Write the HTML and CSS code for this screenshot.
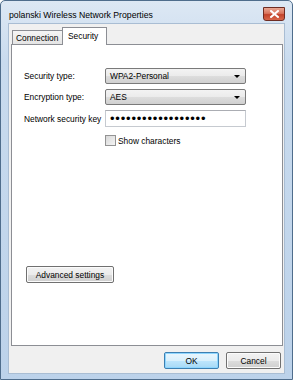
FILE: index.html
```html
<!DOCTYPE html>
<html lang="en">
<head>
    <meta charset="UTF-8">
    <title>polanski Wireless Network Properties</title>
    <link rel="stylesheet" href="styles.css">
</head>
<body>
    <div class="window">
        <div class="titlebar">
            <span class="title">polanski Wireless Network Properties</span>
            <button class="close" title="Close">
                <svg width="9" height="8" viewBox="0 0 9 8">
                    <path d="M1 1 L8 7 M8 1 L1 7" stroke="#ffffff" stroke-width="2" stroke-linecap="square"/>
                </svg>
            </button>
        </div>
        <div class="client">
            <div class="tabs">
                <div class="tab">Connection</div>
                <div class="tab active">Security</div>
            </div>
            <div class="panel">
                <div class="form">
                    <label class="label">Security type:</label>
                    <div class="combo">WPA2-Personal<span class="arrow"></span></div>
                    <label class="label">Encryption type:</label>
                    <div class="combo">AES<span class="arrow"></span></div>
                    <label class="label">Network security key</label>
                    <div class="textbox">&bull;&bull;&bull;&bull;&bull;&bull;&bull;&bull;&bull;&bull;&bull;&bull;&bull;&bull;&bull;&bull;&bull;&bull;</div>
                    <div class="check-row">
                        <span class="checkbox"></span>
                        <span>Show characters</span>
                    </div>
                </div>
                <button class="btn advanced">Advanced settings</button>
            </div>
            <div class="actions">
                <button class="btn default">OK</button>
                <button class="btn">Cancel</button>
            </div>
        </div>
    </div>
</body>
</html>
```

FILE: styles.css
```css
* {
    box-sizing: border-box;
}
body {
    margin: 0;
    padding: 0;
    background-color: #ffffff;
    font-family: "Liberation Sans", Arial, sans-serif;
    font-size: 8.4px;
    color: #000000;
}
.window {
    width: 293px;
    height: 380px;
    border: 1px solid #4f6d8c;
    border-radius: 5px 5px 0 0;
    background: linear-gradient(to bottom, #dde8f4 0px, #c9dbee 60px, #bcd2ea 380px);
    display: flex;
    flex-direction: column;
}
.titlebar {
    height: 22px;
    display: flex;
    align-items: center;
    padding: 0 7px 0 8px;
}
.title {
    flex: 1;
    font-size: 8.7px;
    padding-top: 6px;
}
.close {
    width: 22px;
    height: 14px;
    margin-top: 3px;
    padding: 0;
    border: 1px solid #6e2c22;
    border-radius: 0 0 3px 3px;
    background: linear-gradient(to bottom, #e9a793 0%, #d9745d 45%, #c2432b 55%, #d8664a 100%);
    display: flex;
    align-items: center;
    justify-content: center;
}
.client {
    height: 351px;
    margin: 0 7px 0 7px;
    background-color: #f0f0f0;
    border: 1px solid #a9bdd3;
    padding: 3px 1px 0 2px;
    display: flex;
    flex-direction: column;
}
.tabs {
    height: 17px;
    display: flex;
    align-items: flex-end;
    padding-left: 1px;
}
.tab {
    height: 14px;
    padding: 1px 3px 0 3px;
    border: 1px solid #8c8e94;
    border-bottom: none;
    background: linear-gradient(to bottom, #f5f5f5, #e4e4e4);
    width: 51px;
    line-height: 12px;
    white-space: nowrap;
}
.tab.active {
    height: 18px;
    width: 45px;
    margin-left: -1px;
    margin-bottom: -1px;
    padding: 2px 4px 0 5px;
    background: #ffffff;
    position: relative;
    z-index: 1;
}
.panel {
    height: 302px;
    border: 1px solid #8c8e94;
    background-color: #ffffff;
    padding: 23px 12px 0 12px;
    display: flex;
    flex-direction: column;
}
.form {
    display: grid;
    grid-template-columns: 81px 141px;
    row-gap: 5px;
    align-items: center;
}
.label {
    display: block;
}
.combo {
    height: 16px;
    border: 1px solid #7a7a7a;
    border-radius: 2px;
    background: linear-gradient(to bottom, #f3f3f3 0%, #ebebeb 50%, #dddddd 51%, #d0d0d0 100%);
    padding-left: 4px;
    display: flex;
    align-items: center;
    justify-content: space-between;
}
.arrow {
    width: 0;
    height: 0;
    margin-right: 5px;
    border-left: 3px solid transparent;
    border-right: 3px solid transparent;
    border-top: 3px solid #000000;
}
.textbox {
    height: 17px;
    border: 1px solid #c6cad0;
    border-top-color: #abadb3;
    background-color: #ffffff;
    padding-left: 4px;
    font-size: 13px;
    letter-spacing: 0.8px;
    line-height: 15px;
}
.check-row {
    grid-column: 2;
    display: flex;
    align-items: center;
    gap: 2px;
    margin-top: 3px;
}
.checkbox {
    width: 11px;
    height: 11px;
    border: 1px solid #939393;
    background: linear-gradient(135deg, #d8d8d8, #f4f4f4);
}
.btn {
    font-family: "Liberation Sans", Arial, sans-serif;
    font-size: 8.4px;
    color: #000000;
    height: 17px;
    padding: 0;
    border: 1px solid #707070;
    border-radius: 2px;
    background: linear-gradient(to bottom, #f2f2f2 0%, #ebebeb 50%, #dddddd 51%, #cfcfcf 100%);
    box-shadow: inset 0 0 0 1px #fbfbfb;
}
.btn.advanced {
    width: 88px;
    margin-top: 120px;
    margin-left: 2px;
}
.actions {
    display: flex;
    justify-content: flex-end;
    gap: 7px;
    padding: 6px 2px 0 0;
}
.actions .btn {
    width: 55px;
}
.btn.default {
    border-color: #3c7fb1;
    background: linear-gradient(to bottom, #eaf6fd 0%, #d9f0fc 50%, #bee6fd 51%, #a7d9f5 100%);
    box-shadow: inset 0 0 0 1px #8ed6ff;
}
```
